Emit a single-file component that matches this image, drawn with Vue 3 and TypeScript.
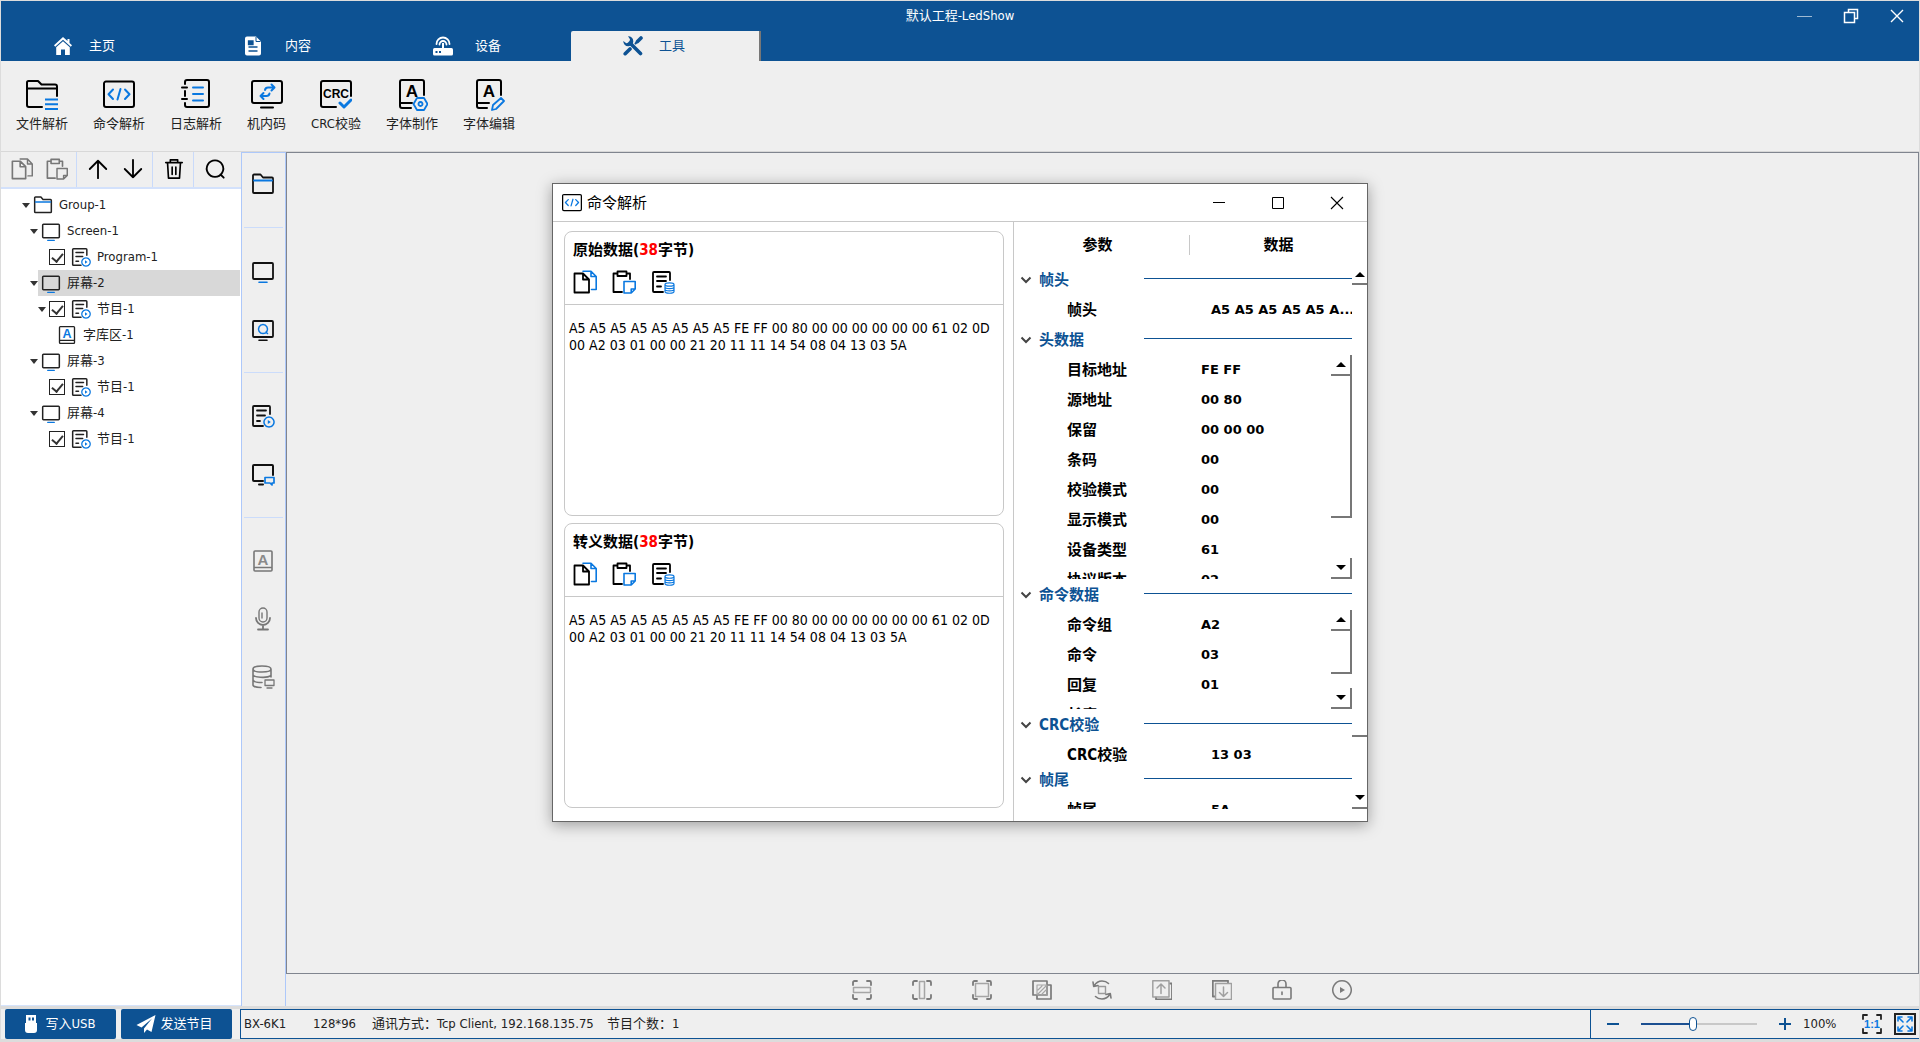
<script setup lang="ts">
import { h, ref } from 'vue'

interface TreeRow {
  label: string
  level: number
  icon: string
  open?: boolean
  check?: boolean
  selected?: boolean
}

interface Field {
  name: string
  value: string
}

const BLUE = '#0a78e0'

const line = (d: string, color = 'currentColor', width = 2): string =>
  `<path d="${d}" fill="none" stroke="${color}" stroke-width="${width}" stroke-linecap="round" stroke-linejoin="round"/>`

const letter = (x: number, y: number, size: number, text: string, color = 'currentColor'): string =>
  `<text x="${x}" y="${y}" font-size="${size}" font-weight="700" font-family="Liberation Sans, sans-serif" text-anchor="middle" fill="${color}">${text}</text>`

const monitor = line('M3 4H21a1 1 0 0 1 1 1V19a1 1 0 0 1-1 1H3a1 1 0 0 1-1-1V5a1 1 0 0 1 1-1z', 'currentColor', 1.8)
const playBadge =
  line('M18 13a5 5 0 1 0 .01 0z', BLUE, 1.5) +
  `<path d="M16.8 16v4l3-2z" fill="${BLUE}"/>`
const corners = line('M1 5V2.500A1.500 1.500 0 0 1 2.500 1H5M15 1h2.500A1.500 1.500 0 0 1 19 2.500V5M19 15v2.500a1.500 1.500 0 0 1-1.500 1.500H15M5 19H2.500A1.500 1.500 0 0 1 1 17.500V15', 'currentColor', 1.8)

const icons: Record<string, [number, string]> = {
  home: [20, '<path d="M10 1L1 9.300l1.200 1.500L10 3.800l7.800 7L19 9.300 16.500 7V3h-2v2.100z" fill="currentColor"/><path d="M10 5.300L3.200 11.300V19H8v-5.500h4V19h4.800V11.300z" fill="currentColor"/>'],
  doc: [20, '<path d="M4 0.500h9L18 5.500v12a2 2 0 0 1-2 2H4a2 2 0 0 1-2-2v-15a2 2 0 0 1 2-2z" fill="currentColor"/><path d="M5.500 5h4.500v3.500H5.500zM5.500 11h9M5.500 15h9" fill="#0d5293" stroke="#0d5293" stroke-width="1.300"/><path d="M13 1v4.500h4.500" fill="none" stroke="#0d5293"/>'],
  router: [20, '<rect x="0" y="12" width="20" height="7.500" rx="1.500" fill="currentColor"/><path d="M9 7h2v6H9z" fill="currentColor"/><path d="M2.500 15h2v2h-2zM6 15h2v2H6z" fill="#0d5293"/>' + line('M3.500 8a6.500 6.500 0 0 1 13 0M6.500 8.500a3.500 3.500 0 0 1 7 0', 'currentColor', 1.8)],
  tools: [20, line('M7 7l10.500 10.500', 'currentColor', 3.6) + line('M2.200 17.700L7 13', 'currentColor', 3.6) + line('M12.500 7.500l1.700-1.700', 'currentColor', 2) + line('M14.500 5.500L18 2', 'currentColor', 3.6) + '<path d="M5 0.300A5 5 0 1 1 0.300 5l3 2.200 3-1 .7-3z" fill="currentColor"/>'],
  min: [16, '<path d="M0 8.500h15" stroke="currentColor" opacity=".6"/>'],
  restore: [16, '<path d="M1.500 4.500h10v10h-10zM5.500 4V1.500h9v9H12" fill="none" stroke="currentColor" stroke-width="1.500"/>'],
  close: [16, '<path d="M2 2l12 12M14 2L2 14" stroke="currentColor" stroke-width="1.400"/>'],

  file: [32, line('M16 28H3a2 2 0 0 1-2-2V3.500A1.500 1.500 0 0 1 2.500 2H12l3.500 3.500H29a2 2 0 0 1 2 2V17M1 9.500H31') + `<path d="M19 20.500h13M19 25.200h13M19 30h13" stroke="${BLUE}" stroke-width="2"/>`],
  cmd: [32, line('M3 2.500H29a2 2 0 0 1 2 2V26a2 2 0 0 1-2 2H3a2 2 0 0 1-2-2V4.500a2 2 0 0 1 2-2z') + line('M10 10.500L5.500 15.200 10 20M22 10.500l4.500 4.700L22 20M17.500 10l-3 10.500', BLUE)],
  log: [32, line('M5 5V3a2 2 0 0 1 2-2H27a2 2 0 0 1 2 2V26a2 2 0 0 1-2 2H7a2 2 0 0 1-2-2v-2M5 12v5M2 8.500h5M2 20h5') + line('M13 8.500h10M13 15h10M13 21.500h10', BLUE)],
  code: [32, line('M3 2H29a2 2 0 0 1 2 2V22a2 2 0 0 1-2 2H3a2 2 0 0 1-2-2V4a2 2 0 0 1 2-2zM10 28.500h12') + line('M14 11q0.500-2.500 3-2.500h6M20.500 5.500l3 3-3 3M18.500 14.500q-0.500 2.500-3 2.500H9.500M12.500 14l-3 3 3 3', BLUE)],
  crc: [32, line('M16 28H3a2 2 0 0 1-2-2V4a2 2 0 0 1 2-2H29a2 2 0 0 1 2 2V17') + letter(16, 19, 12, 'CRC') + line('M20 24l4 4 7-7', BLUE, 3)],
  fontMake: [32, line('M15 29H6a2 2 0 0 1-2-2V3a2 2 0 0 1 2-2H26a2 2 0 0 1 2 2V16M4 24h12') + letter(16, 18, 17, 'A') + line('M21 19h7l3.500 6-3.500 6H21l-3.500-6zM24.500 23a2 2 0 1 0 .01 0z', BLUE, 1.8)],
  fontEdit: [32, line('M14 29H6a2 2 0 0 1-2-2V3a2 2 0 0 1 2-2H26a2 2 0 0 1 2 2V16M4 24h12') + letter(16, 18, 17, 'A') + line('M19 31l1-5 8-7 3 3-8 8z', BLUE, 1.8)],

  copy: [24, line('M1.500 3.500H10L16 9.500V22.500H1.500zM10 3.500V9.500H16', 'currentColor', 1.8) + line('M10 1.200H18L23.200 6.500V19.500H18.500M18 1.200V6.500H23', 'var(--accent)', 1.6)],
  paste: [24, line('M10 22H1.500V3.500H5.500M14.500 3.500H18V9M5.500 1.500H14.500V6H5.500z', 'currentColor', 1.8) + line('M12 11.500H23.200V19l-4 4H12zM19.200 23v-4h4', 'var(--accent)', 1.6)],
  store: [24, line('M12 22H3a1 1 0 0 1-1-1V3a1 1 0 0 1 1-1H18a1 1 0 0 1 1 1V10M6 6.500h9M6 11h9M6 16.500h4', 'currentColor', 1.8) + line('M14 14.500c0-2.300 9-2.300 9 0s-9 2.300-9 0v7c0 2.300 9 2.300 9 0v-7M14 17c0 2.200 9 2.200 9 0M14 19.300c0 2.200 9 2.200 9 0', BLUE, 1.2)],
  up: [24, line('M12 22V3M3 12l9-9 9 9', 'currentColor', 2)],
  down: [24, line('M12 2v19M3 12l9 9 9-9', 'currentColor', 2)],
  trash: [24, line('M3 5H21M8 4V2h8v2M5 6l1 16H18L19 6M10 10v8M14 10v8', 'currentColor', 1.8)],
  search: [24, line('M12 2.500a9 9 0 1 0 .01 0zM18 18l3.500 3.500')],

  folder: [24, line('M2 3.500A1 1 0 0 1 3 2.500H9.500l2.500 3H21a1 1 0 0 1 1 1V20a1 1 0 0 1-1 1H3a1 1 0 0 1-1-1z', 'currentColor', 1.8) + line('M3 8.500H21', BLUE, 1.8)],
  monitor: [24, monitor + line('M8 23.200h8', BLUE, 1.6)],
  preview: [24, monitor + line('M8 23.200h8', 'currentColor', 1.6) + line('M12 7.500a4.500 4.500 0 1 0 .01 0zM15 15l1.500 1.500', BLUE, 1.5)],
  program: [24, line('M12 22H3a1 1 0 0 1-1-1V3a1 1 0 0 1 1-1H18a1 1 0 0 1 1 1V10M6 6.500h9M6 11.500h8M6 17h3', 'currentColor', 1.8) + playBadge],
  chat: [24, line('M12 19H3a1 1 0 0 1-1-1V4a1 1 0 0 1 1-1H21a1 1 0 0 1 1 1V13M8 22.500h4') + line('M14 15.500h9v5.500h-2v2l-2-2h-5z', BLUE, 1.7)],
  font: [24, line('M4 2H20a1 1 0 0 1 1 1V21a1 1 0 0 1-1 1H4a1 1 0 0 1-1-1V3a1 1 0 0 1 1-1zM3 18.500H21', 'currentColor', 1.6) + letter(12, 15.5, 15, 'A', 'var(--accent)')],
  mic: [24, line('M12 1a4 4 0 0 1 4 4v6a4 4 0 0 1-8 0V5a4 4 0 0 1 4-4zM11 6v5', 'currentColor', 1.4) + line('M5 11a7 7 0 0 0 14 0M12 18v4M7 22.500h10', 'currentColor', 1.8)],
  db: [24, line('M2 4c0-4 18-4 18 0s-18 4-18 0zM2 4V20c0 1.500 4 2.500 8 2.500M20 4v8M2 9.500c0 3 14 4 18 1M2 14.500c0 2 4 3 9 3', 'currentColor', 1.6) + line('M14 15h9v5.500h-9zM16 23h5', 'currentColor', 1.3)],

  fitW: [20, corners + line('M1.500 7.500h17v5h-17z', '#a5a5a5', 1.5)],
  fitH: [20, corners + line('M7.500 1.500h5v17h-5z', '#a5a5a5', 1.5)],
  fitAll: [20, corners + line('M3.500 3.500h13v13h-13z', '#a5a5a5', 1.5)],
  overlap: [20, line('M1 1H15V15H1zM5 15v4H19V5H15', 'currentColor', 1.7) + line('M5 5H15V15H5zM6 10l4-4M6 14l8-8M10 14l4-4', '#a5a5a5', 1.1)],
  rotate: [20, line('M6.500 6.500h7v7h-7z', '#9a9a9a', 1.4) + line('M2 6Q5 1 10 1q4 0 6.500 2.500M1 2l.7 4.500L6 5.500M18 14q-3 5-8 5-4 0-6.500-2.500M19 18l-.7-4.500-4.300 1', 'currentColor', 1.6)],
  raise: [20, line('M4 17.500V19.300H20V3.500H18', 'currentColor', 1.8) + line('M0.800 0.800H17V17H0.800zM9 13.500V4M5 8l4-4 4 4', '#a0a0a0', 1.5)],
  lower: [20, line('M16 2.500V0.800H0.800V16.500H2.500', 'currentColor', 1.8) + line('M3.500 3.500H19.500V19.500H3.500zM11.500 7v9.500M7.500 12.500l4 4 4-4', '#a0a0a0', 1.5)],
  lock: [20, line('M2 7.500H18a1 1 0 0 1 1 1V18a1 1 0 0 1-1 1H2a1 1 0 0 1-1-1V8.500a1 1 0 0 1 1-1zM6 7V4a4 4 0 0 1 8 0v3M10 12v2.500', 'currentColor', 1.6)],
  play: [20, line('M10 0.800a9.200 9.200 0 1 0 .01 0z', 'currentColor', 1.5) + '<path d="M8 7v6l5-3z" fill="currentColor"/>'],

  usb: [20, '<path d="M5 1h10v8H5zM4 9h12v7a3 3 0 0 1-3 3H7a3 3 0 0 1-3-3z" fill="currentColor"/><path d="M7.500 3.500h2v3h-2zM11 3.500h2v3h-2z" fill="#0d5293"/>'],
  send: [20, '<path d="M19.500 1L0.500 11l5 2.500L16 4.500 8 14.500V19l3-3.500 4.500 2.500z" fill="currentColor"/>'],
  minus: [14, '<path d="M1 7h12" stroke="currentColor" stroke-width="2"/>'],
  plus: [14, '<path d="M1 7h12M7 1v12" stroke="currentColor" stroke-width="2"/>'],
  actual: [20, line('M1 5V1H5M15 1h4V5M19 15v4h-4M5 19H1v-4', '#222', 1.8) + letter(10, 14, 11, '1:1', BLUE)],
  expand: [20, line('M8 8L3 3M3 7V3H7M12 8l5-5M13 3h4V7M8 12l-5 5M3 13v4H7M12 12l5 5M17 13v4h-4', BLUE, 1.6)],
  winMin: [14, '<path d="M1 6.500h12" stroke="currentColor"/>'],
  winMax: [14, '<path d="M1.500 1.500h11v11h-11z" fill="none" stroke="currentColor"/>'],
  winClose: [14, '<path d="M1 1l12 12M13 1L1 13" stroke="currentColor" stroke-width="1.100"/>'],
  chevron: [12, '<path d="M1.500 3.500L6 8 10.500 3.500" fill="none" stroke="#444" stroke-width="2"/>'],
}

const Icon = (props: { name: string; size?: number }) => {
  const [box, body] = icons[props.name]
  const size = props.size ?? box
  return h('svg', { viewBox: `0 0 ${box} ${box}`, width: size, height: size, 'aria-hidden': 'true', innerHTML: body })
}
Icon.props = ['name', 'size']

const tabs = [
  { label: '主页', icon: 'home' },
  { label: '内容', icon: 'doc', wide: true },
  { label: '设备', icon: 'router', wide: true },
  { label: '工具', icon: 'tools' },
]
const activeTab = ref('工具')

const tools = [
  { label: '文件解析', icon: 'file' },
  { label: '命令解析', icon: 'cmd' },
  { label: '日志解析', icon: 'log' },
  { label: '机内码', icon: 'code' },
  { label: 'CRC校验', icon: 'crc' },
  { label: '字体制作', icon: 'fontMake' },
  { label: '字体编辑', icon: 'fontEdit' },
]

const tree = ref<TreeRow[]>([
  { label: 'Group-1', level: 0, icon: 'folder', open: true },
  { label: 'Screen-1', level: 1, icon: 'monitor', open: true },
  { label: 'Program-1', level: 2, icon: 'program', check: true },
  { label: '屏幕-2', level: 1, icon: 'monitor', open: true, selected: true },
  { label: '节目-1', level: 2, icon: 'program', open: true, check: true },
  { label: '字库区-1', level: 3, icon: 'font' },
  { label: '屏幕-3', level: 1, icon: 'monitor', open: true },
  { label: '节目-1', level: 2, icon: 'program', check: true },
  { label: '屏幕-4', level: 1, icon: 'monitor', open: true },
  { label: '节目-1', level: 2, icon: 'program', check: true },
])

const strip: { icon: string; title: string; off?: boolean }[][] = [
  [{ icon: 'folder', title: '分组' }],
  [{ icon: 'monitor', title: '屏幕' }, { icon: 'preview', title: '预览' }],
  [{ icon: 'program', title: '节目' }, { icon: 'chat', title: '消息' }],
  [{ icon: 'font', title: '字库', off: true }, { icon: 'mic', title: '语音', off: true }, { icon: 'db', title: '数据', off: true }],
]

const canvasTools = ['fitW', 'fitH', 'fitAll', 'overlap', 'rotate', 'raise', 'lower', 'lock', 'play']

const bytes =
  'A5 A5 A5 A5 A5 A5 A5 A5 FE FF 00 80 00 00 00 00 00 00 61 02 0D 00 A2 03 01 00 00 21 20 11 11 14 54 08 04 13 03 5A'
const cards = ref([
  { id: 'raw', title: '原始数据', text: bytes },
  { id: 'escaped', title: '转义数据', text: bytes },
])

const MAX_CHARS = 16
const elide = (s: string): string => (s.length > MAX_CHARS ? s.slice(0, MAX_CHARS) + '...' : s)

const headFields: Field[] = [
  { name: '目标地址', value: 'FE FF' },
  { name: '源地址', value: '00 80' },
  { name: '保留', value: '00 00 00' },
  { name: '条码', value: '00' },
  { name: '校验模式', value: '00' },
  { name: '显示模式', value: '00' },
  { name: '设备类型', value: '61' },
  { name: '协议版本', value: '02' },
]
const cmdFields: Field[] = [
  { name: '命令组', value: 'A2' },
  { name: '命令', value: '03' },
  { name: '回复', value: '01' },
  { name: '长度', value: '' },
]
const sections: { title: string; kind: string; fields: Field[] }[] = [
  { title: '帧头', kind: 'plain', fields: [{ name: '帧头', value: 'A5 A5 A5 A5 A5 A5 A5 A5' }] },
  { title: '头数据', kind: 'scroll tall', fields: headFields },
  { title: '命令数据', kind: 'scroll short', fields: cmdFields },
  { title: 'CRC校验', kind: 'plain tight', fields: [{ name: 'CRC校验', value: '13 03' }] },
  { title: '帧尾', kind: 'plain', fields: [{ name: '帧尾', value: '5A' }] },
]

const zoom = ref(44)
</script>

<template>
  <div class="app">
    <header class="titlebar">
      <div class="caption">
        <span class="app-name">默认工程-LedShow</span>
        <div class="win-buttons">
          <button type="button" aria-label="最小化"><Icon name="min" /></button>
          <button type="button" aria-label="还原"><Icon name="restore" /></button>
          <button type="button" aria-label="关闭"><Icon name="close" /></button>
        </div>
      </div>
      <nav class="tabs">
        <button
          v-for="t in tabs"
          :key="t.label"
          type="button"
          class="tab"
          :class="{ active: t.label === activeTab, wide: t.wide }"
          @click="activeTab = t.label"
        >
          <Icon :name="t.icon" /><span>{{ t.label }}</span>
        </button>
      </nav>
    </header>

    <div class="ribbon">
      <button v-for="t in tools" :key="t.label" type="button" class="tool">
        <Icon :name="t.icon" /><span>{{ t.label }}</span>
      </button>
    </div>

    <main class="work">
      <aside class="explorer">
        <div class="tree-tools">
          <div class="tg wide-group">
            <button type="button" class="faded" aria-label="复制"><Icon name="copy" :size="22" /></button>
            <button type="button" class="faded" aria-label="粘贴"><Icon name="paste" :size="22" /></button>
          </div>
          <div class="tg wide-group">
            <button type="button" aria-label="上移"><Icon name="up" :size="22" /></button>
            <button type="button" aria-label="下移"><Icon name="down" :size="22" /></button>
          </div>
          <div class="tg trash-group">
            <button type="button" aria-label="删除"><Icon name="trash" :size="22" /></button>
          </div>
          <div class="tg find-group">
            <button type="button" aria-label="搜索"><Icon name="search" :size="22" /></button>
          </div>
        </div>
        <ul class="tree">
          <li v-for="(row, i) in tree" :key="i" class="row" :class="['l' + row.level, { selected: row.selected }]">
            <span class="twist" :class="{ open: row.open }"></span>
            <div class="node">
              <input v-if="row.check !== undefined" :id="'n' + i" v-model="row.check" type="checkbox" />
              <Icon :name="row.icon" :size="20" />
              <label :for="row.check !== undefined ? 'n' + i : undefined">{{ row.label }}</label>
            </div>
          </li>
        </ul>
      </aside>

      <div class="strip">
        <div v-for="(g, i) in strip" :key="i" class="strip-group">
          <button v-for="b in g" :key="b.icon" type="button" :class="{ off: b.off }" :aria-label="b.title">
            <Icon :name="b.icon" />
          </button>
        </div>
      </div>

      <section class="stage">
        <div class="canvas"></div>
        <div class="canvas-tools">
          <button v-for="c in canvasTools" :key="c" type="button" :aria-label="c"><Icon :name="c" /></button>
        </div>
      </section>
    </main>

    <footer class="bottom">
      <button type="button" class="primary"><Icon name="usb" />写入USB</button>
      <button type="button" class="primary"><Icon name="send" />发送节目</button>
      <div class="status">
        <div class="info">
          <span class="model">BX-6K1</span>
          <span class="res">128*96</span>
          <span class="link">通讯方式：Tcp Client, 192.168.135.75</span>
          <span>节目个数：1</span>
        </div>
        <div class="zoom">
          <button type="button" aria-label="缩小"><Icon name="minus" /></button>
          <input v-model.number="zoom" type="range" min="0" max="100" aria-label="缩放" :style="{ '--fill': zoom + '%' }" />
          <button type="button" aria-label="放大"><Icon name="plus" /></button>
          <span class="percent">100%</span>
          <button type="button" aria-label="实际大小"><Icon name="actual" /></button>
          <button type="button" class="fit" aria-label="适应窗口"><Icon name="expand" /></button>
        </div>
      </div>
    </footer>

    <div class="dialog" role="dialog" aria-labelledby="dlg-title">
      <div class="dlg-bar">
        <Icon name="cmd" :size="20" />
        <span id="dlg-title">命令解析</span>
        <div class="dlg-buttons">
          <button type="button" aria-label="最小化"><Icon name="winMin" /></button>
          <button type="button" aria-label="最大化"><Icon name="winMax" /></button>
          <button type="button" aria-label="关闭"><Icon name="winClose" /></button>
        </div>
      </div>
      <div class="dlg-body">
        <div class="data-col">
          <div v-for="c in cards" :key="c.id" class="card">
            <div class="card-head">
              <label :for="c.id">{{ c.title }}(<em>38</em>字节)</label>
              <div class="card-tools">
                <button type="button" aria-label="复制"><Icon name="copy" /></button>
                <button type="button" aria-label="粘贴"><Icon name="paste" /></button>
                <button type="button" aria-label="解析"><Icon name="store" /></button>
              </div>
            </div>
            <textarea :id="c.id" v-model="c.text" spellcheck="false"></textarea>
          </div>
        </div>

        <div class="parse-col">
          <div class="cols"><span>参数</span><span>数据</span></div>
          <div class="parse">
            <div class="sections">
              <section v-for="s in sections" :key="s.title" class="sec" :class="s.kind">
                <h3><Icon name="chevron" /><span>{{ s.title }}</span><i></i></h3>
                <div class="fields">
                  <dl>
                    <div v-for="f in s.fields" :key="f.name" class="field">
                      <dt>{{ f.name }}</dt>
                      <dd>{{ elide(f.value) }}</dd>
                    </div>
                  </dl>
                  <div v-if="s.kind.startsWith('scroll')" class="bar inner">
                    <button type="button" class="up" aria-label="向上"></button>
                    <div class="thumb"></div>
                    <button type="button" class="down" aria-label="向下"></button>
                  </div>
                </div>
              </section>
            </div>
            <div class="bar outer">
              <button type="button" class="up" aria-label="向上"></button>
              <div class="thumb"></div>
              <button type="button" class="down" aria-label="向下"></button>
            </div>
          </div>
        </div>
      </div>
    </div>
  </div>
</template>

<style>
body {
  margin: 0;
  background: #dcdcdc;
}
</style>

<style scoped>
.app {
  --accent: #0a78e0;
  --brand: #0d5293;
  --soft: #adc8fa;
  position: relative;
  box-sizing: border-box;
  height: 100vh;
  min-height: 840px;
  padding: 1px 1px 3px;
  display: flex;
  flex-direction: column;
  background: #dcdcdc;
  color: #222;
  font: 13px/16px 'DejaVu Sans Condensed', 'Noto Sans CJK SC', sans-serif;
}
.app * {
  box-sizing: border-box;
}
svg {
  display: block;
  flex: none;
}
button {
  display: flex;
  align-items: center;
  justify-content: center;
  padding: 0;
  border: 0;
  background: none;
  color: inherit;
  font: inherit;
}

/* title bar */
.titlebar {
  background: var(--brand);
  color: #fff;
}
.caption {
  position: relative;
  height: 30px;
  display: flex;
  align-items: center;
  justify-content: center;
}
.win-buttons {
  position: absolute;
  right: 14px;
  top: 7px;
  display: flex;
  gap: 30px;
}
.tabs {
  display: flex;
  height: 30px;
}
.tab {
  width: 190px;
  padding-left: 52px;
  justify-content: flex-start;
  gap: 16px;
}
.tab.wide {
  gap: 22px;
}
.tab.active {
  background: #efefef;
  color: var(--brand);
  border-right: 2px solid #777;
  border-radius: 2px 0 0 0;
}

/* ribbon */
.ribbon {
  display: flex;
  gap: 25px;
  height: 90px;
  padding: 18px 15px 0;
  background: #efefef;
}
.tool {
  flex-direction: column;
  justify-content: flex-start;
  gap: 5px;
}
.tool svg {
  color: #000;
}

/* work area */
.work {
  flex: 1;
  min-height: 0;
  display: flex;
  background: #efefef;
  border-top: 1px solid #d8d8d8;
}
.explorer {
  width: 240px;
  background: #fff;
  border-bottom: 1px solid #d6e4fc;
}
.tree-tools {
  display: flex;
  height: 37px;
  background: #efefef;
  border-bottom: 2px solid #d3e1fb;
}
.tg {
  display: flex;
  align-items: center;
  justify-content: center;
  gap: 13px;
  padding: 0 0 2px 2px;
  color: #000;
  border-right: 1px solid #c9dafa;
}
.tg:last-child {
  border-right: 0;
}
.wide-group {
  width: 76px;
}
.trash-group {
  width: 41px;
}
.find-group {
  flex: 1;
  padding: 0 6px 2px 0;
}
.faded {
  --accent: #777;
  color: #777;
}
.tree {
  list-style: none;
  margin: 0;
  padding: 3px 1px 0 0;
}
.row {
  display: flex;
  height: 26px;
}
.l0 {
  padding-left: 21px;
}
.l1 {
  padding-left: 29px;
}
.l2 {
  padding-left: 37px;
}
.l3 {
  padding-left: 45px;
}
.twist {
  width: 8px;
  display: flex;
  align-items: center;
}
.twist.open::before {
  content: '';
  border: 4px solid transparent;
  border-top: 5px solid #333;
  border-bottom: 0;
}
.node {
  flex: 1;
  display: flex;
  align-items: center;
  gap: 6px;
  padding-left: 3px;
}
.selected .node {
  background: #d8d8d8;
}
.node input {
  appearance: none;
  flex: none;
  width: 16px;
  height: 16px;
  margin: 0;
  border: 1px solid #222;
  background: #fff;
}
.node input:checked::before {
  content: '';
  display: block;
  width: 5px;
  height: 9px;
  margin: 1px 4px;
  border: solid #333;
  border-width: 0 2px 2px 0;
  transform: rotate(40deg);
}

/* vertical tool strip */
.strip {
  width: 45px;
  border: 1px solid var(--soft);
  border-bottom: 0;
  padding: 2px 2px 0;
}
.strip-group {
  padding: 14px 0;
  border-bottom: 1px solid #cbdcfb;
  color: #111;
}
.strip-group:first-child {
  padding-top: 0;
}
.strip-group:last-child {
  border-bottom: 0;
}
.strip-group button {
  width: 100%;
  height: 58px;
  padding-right: 2px;
}
.strip-group .off {
  --accent: #8a8a8a;
  color: #777;
}
.stage {
  flex: 1;
  display: flex;
  flex-direction: column;
}
.canvas {
  flex: 1;
  border: 1px solid #80858f;
}
.canvas-tools {
  height: 32px;
  display: flex;
  align-items: center;
  justify-content: center;
  gap: 40px;
  padding-right: 2px;
  color: #7a7a7a;
}

/* bottom bar */
.bottom {
  flex: none;
  display: flex;
  height: 30px;
  margin-top: 3px;
  padding-left: 4px;
  background: #efefef;
}
.primary {
  width: 111px;
  margin-right: 5px;
  padding-right: 4px;
  gap: 4px;
  border-radius: 2px;
  background: var(--brand);
  color: #fff;
}
.status {
  flex: 1;
  margin-left: 3px;
  display: flex;
  border: 1px solid var(--brand);
  border-right: 0;
}
.info {
  flex: 1;
  display: flex;
  align-items: center;
  padding-left: 3px;
}
.model {
  width: 69px;
}
.res {
  width: 59px;
}
.link {
  width: 235px;
  white-space: nowrap;
}
.zoom {
  display: flex;
  align-items: center;
  width: 329px;
  padding-left: 15px;
  border-left: 1px solid var(--brand);
  color: var(--brand);
}
.zoom input {
  appearance: none;
  width: 116px;
  height: 16px;
  margin: 0 21px;
  background: linear-gradient(90deg, #1b4f91 var(--fill), #c8c8c8 var(--fill)) center / 100% 2px no-repeat;
}
.zoom input::-webkit-slider-thumb {
  appearance: none;
  width: 8px;
  height: 14px;
  border: 1px solid var(--brand);
  border-radius: 4px;
  background: #fff;
}
.percent {
  width: 70px;
  padding-left: 11px;
  color: #222;
}
.fit {
  width: 22px;
  height: 22px;
  margin-left: 12px;
  border: 2px solid #222;
}

/* dialog window */
.dialog {
  position: absolute;
  top: 183px;
  left: calc(50% - 408px);
  width: 816px;
  height: 639px;
  display: flex;
  flex-direction: column;
  background: #fff;
  border: 1px solid #666;
  box-shadow: 0 3px 14px rgba(0, 0, 0, 0.35);
  color: #000;
}
.dlg-bar {
  display: flex;
  align-items: center;
  gap: 5px;
  height: 38px;
  padding: 0 23px 0 9px;
  border-bottom: 1px solid #c8c8c8;
  font-size: 15px;
}
.dlg-buttons {
  margin-left: auto;
  display: flex;
  gap: 45px;
}
.dlg-body {
  flex: 1;
  min-height: 0;
  display: flex;
}
.data-col {
  flex: 1;
  display: flex;
  flex-direction: column;
  gap: 7px;
  padding: 9px 9px 13px 11px;
}
.card {
  flex: 1;
  display: flex;
  flex-direction: column;
  border: 1px solid #c8c8c8;
  border-radius: 8px;
}
.card-head {
  height: 73px;
  padding: 9px 8px 0;
  border-bottom: 1px solid #c8c8c8;
}
.card-head label {
  display: block;
  font-size: 15px;
  line-height: 18px;
  font-weight: 700;
}
.card-head em {
  font-style: normal;
  color: #f00;
}
.card-tools {
  display: flex;
  gap: 15px;
  margin-top: 11px;
}
.card textarea {
  flex: 1;
  margin: 0;
  padding: 15px 4px 0;
  border: 0;
  border-radius: 8px;
  resize: none;
  outline: none;
  overflow: hidden;
  background: transparent;
  color: #000;
  font: 14px/17px 'DejaVu Sans Condensed', 'Noto Sans CJK SC', sans-serif;
}
.parse-col {
  width: 354px;
  display: flex;
  flex-direction: column;
  padding-bottom: 12px;
  border-left: 1px solid #c8c8c8;
  font-size: 15px;
  font-weight: 700;
}
.cols {
  display: flex;
  height: 43px;
  padding: 13px 0 10px;
}
.cols span {
  flex: 1;
  line-height: 20px;
  text-align: center;
}
.cols span:first-child {
  flex: none;
  width: 175px;
  padding-right: 8px;
}
.cols span + span {
  border-left: 1px solid #c8c8c8;
}
.parse {
  flex: 1;
  min-height: 0;
  display: flex;
}
.sections {
  flex: 1;
  overflow: hidden;
}
.sec h3 {
  display: flex;
  align-items: center;
  height: 30px;
  margin: 0;
  padding: 0 0 1px 6px;
  color: var(--brand);
  font-size: 15px;
}
.sec h3 span {
  width: 112px;
  padding: 1px 0 0 7px;
}
.sec h3 i {
  flex: 1;
  height: 1px;
  margin-bottom: 2px;
  background: var(--brand);
}
.fields {
  display: flex;
}
.scroll .fields {
  overflow: hidden;
}
.tall .fields {
  height: 224px;
  margin-bottom: 1px;
}
.short .fields {
  height: 99px;
  margin-bottom: 1px;
}
.tight .fields {
  height: 25px;
}
dl {
  flex: 1;
  min-width: 0;
  margin: 0;
}
.field {
  display: flex;
  height: 30px;
  line-height: 30px;
  padding-left: 53px;
}
dt {
  width: 134px;
  flex: none;
}
.plain dt {
  width: 144px;
}
dd {
  flex: 1;
  min-width: 0;
  margin: 0;
  white-space: nowrap;
  font-family: 'DejaVu Sans', sans-serif;
  font-size: 13px;
}

/* classic scroll bars */
.bar {
  display: flex;
  flex-direction: column;
}
.bar button {
  height: 21px;
  flex: none;
  border-bottom: 2px solid #777;
}
.inner {
  width: 21px;
}
.inner button,
.inner .thumb {
  border-right: 2px solid #777;
}
.bar button::before {
  content: '';
  border: 5px solid transparent;
}
.bar .up::before {
  border-top: 0;
  border-bottom-color: #000;
}
.bar .down::before {
  border-bottom: 0;
  border-top-color: #000;
}
.bar .down {
  margin-top: auto;
}
.bar .thumb {
  border-bottom: 2px solid #777;
}
.tall .thumb {
  height: 142px;
}
.short .thumb {
  height: 43px;
}
.outer {
  width: 15px;
}
.outer .up {
  height: 20px;
}
.outer .thumb {
  height: 452px;
}
</style>
